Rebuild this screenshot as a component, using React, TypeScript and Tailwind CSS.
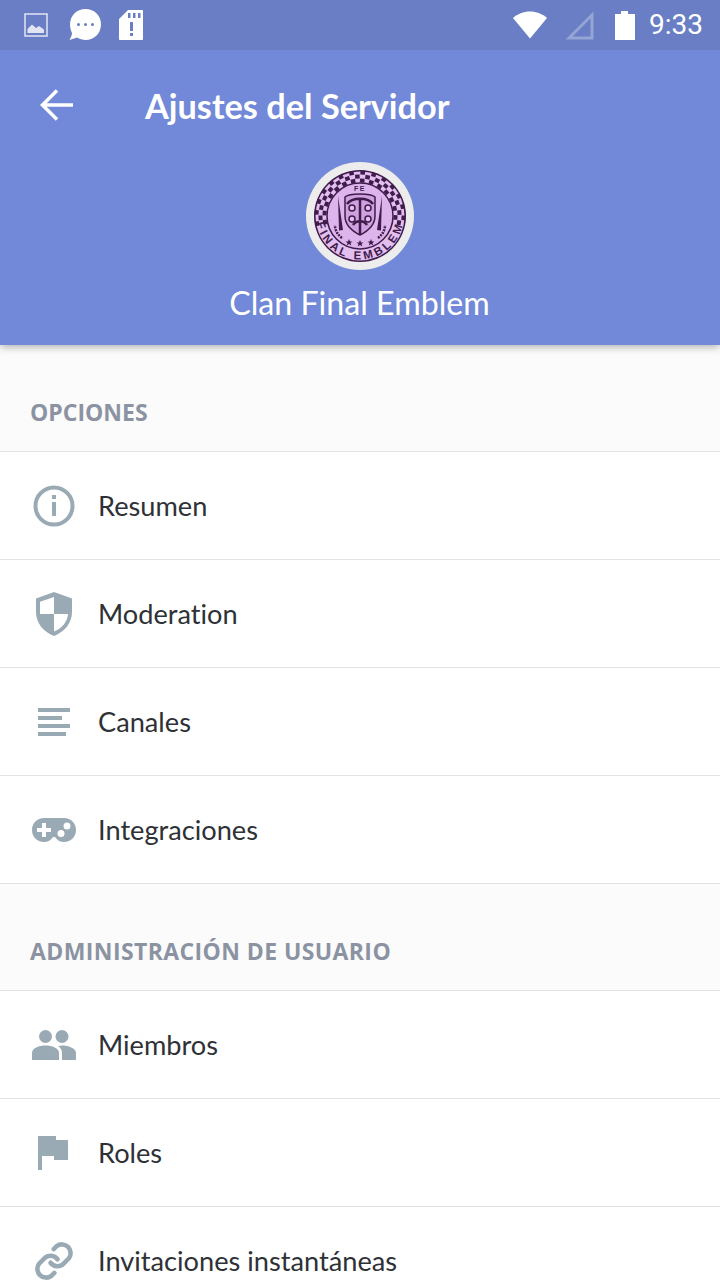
import type { ReactNode } from "react";

const font = { fontFamily: "Lato, 'Open Sans', sans-serif" };
const DARK = "#3F1C4B";

function IconBox({ children }: { children: ReactNode }) {
  return <div className="flex h-12 w-12 shrink-0 items-center justify-center text-[#99AAB5]">{children}</div>;
}

const InfoIcon = () => (
  <svg width="42" height="42" viewBox="0 0 42 42" fill="none">
    <circle cx="21" cy="21" r="18.500" stroke="currentColor" strokeWidth="4" />
    <rect x="19" y="10" width="4" height="4" fill="currentColor" />
    <rect x="19" y="17" width="4" height="14" fill="currentColor" />
  </svg>
);

const ShieldIcon = () => (
  <svg width="38" height="44" viewBox="0 0 38 44">
    <path
      fill="currentColor"
      fillRule="evenodd"
      d="M19 0 37 6.500V20C37 31 29.500 40 19 44 8.500 40 1 31 1 20V6.500ZM19 5 5 9.800V22H19ZM19 22V39.500C26.500 36.500 32.500 30 33 22Z"
    />
  </svg>
);

const LinesIcon = () => (
  <svg width="32" height="28" viewBox="0 0 32 28" fill="currentColor">
    <rect x="0" y="0" width="32" height="4" />
    <rect x="0" y="8" width="24" height="4" />
    <rect x="0" y="16" width="32" height="4" />
    <rect x="0" y="24" width="28" height="4" />
  </svg>
);

const GamepadIcon = () => (
  <svg width="44" height="24" viewBox="0 0 44 24">
    <path
      fill="currentColor"
      fillRule="evenodd"
      d="M12 0H32C39 0 44 5.400 44 12 44 18.600 39 24 32 24 28 24 25 22 23 19H21C19 22 16 24 12 24 5 24 0 18.600 0 12 0 5.400 5 0 12 0ZM10 5V10H5V14H10V19H14V14H19V10H14V5ZM35 4.500A3.500 3.500 0 1 0 35 11.500 3.500 3.500 0 1 0 35 4.500ZM29 12A3.500 3.500 0 1 0 29 19 3.500 3.500 0 1 0 29 12Z"
    />
  </svg>
);

const PeopleIcon = () => (
  <svg width="44" height="30" viewBox="0 0 44 30" fill="currentColor">
    <circle cx="13.500" cy="6.500" r="6.500" />
    <circle cx="30" cy="6.500" r="6.500" />
    <path d="M0 30V23C0 18 7 15.500 13.500 15.500 20 15.500 27 18 27 23V30Z" />
    <path d="M30 30V23C30 20 28.500 17.500 26 16 27.500 15.700 29 15.500 30 15.500 36 15.500 44 18 44 23V30Z" />
  </svg>
);

const FlagIcon = () => (
  <svg width="32" height="34" viewBox="0 0 32 34" fill="currentColor">
    <path d="M0 0H18V4H30V24H16V20H4V34H0Z" />
  </svg>
);

const LinkIcon = () => (
  <svg width="42" height="42" viewBox="0 0 24 24" fill="none" stroke="currentColor" strokeWidth="2.600" strokeLinecap="round">
    <path d="M10 13a5 5 0 0 0 7.500.5l3-3a5 5 0 0 0-7-7l-1.700 1.700" />
    <path d="M14 11a5 5 0 0 0-7.500-.5l-3 3a5 5 0 0 0 7 7l1.700-1.700" />
  </svg>
);

function Emblem() {
  const cells = [];
  // checker band, runs over the top from one end of the name to the other
  for (let row = 0; row < 3; row++) {
    const r = 35.500 + row * 4;
    for (let i = 0; i < 28; i++) {
      if ((i + row) % 2) continue;
      const deg = -190 + i * 7.400;
      const a = (deg * Math.PI) / 180;
      const cx = 46 + r * Math.cos(a);
      const cy = 46 + r * Math.sin(a);
      cells.push(
        <rect
          key={`${row}-${i}`}
          x={cx - 2.300}
          y={cy - 2}
          width="4.600"
          height="4"
          fill={DARK}
          transform={`rotate(${deg + 90} ${cx} ${cy})`}
        />,
      );
    }
  }
  return (
    <svg width="92" height="92" viewBox="0 0 92 92">
      <circle cx="46" cy="46" r="46" fill={DARK} />
      <circle cx="46" cy="46" r="44.500" fill="#E3BFF0" />
      {cells}
      <circle cx="46" cy="46" r="33" fill="#DDB5EC" stroke={DARK} strokeWidth="1.500" />
      <defs>
        <path id="bottomArc" d="M2.500 52A44 44 0 0 0 89.500 52" />
      </defs>
      <text fontSize="11.500" fontWeight="700" fill={DARK} letterSpacing="3" style={{ fontFamily: "'Liberation Sans', sans-serif" }}>
        <textPath href="#bottomArc" startOffset="50%" textAnchor="middle">
          FINAL EMBLEM
        </textPath>
      </text>
      <text x="46" y="21" fontSize="7" fontWeight="700" fill={DARK} textAnchor="middle" letterSpacing="1.500" style={{ fontFamily: "'Liberation Sans', sans-serif" }}>
        FE
      </text>
      <path d="M31 27C36 23 56 23 61 27V46C61 56 52 62 46 65 40 62 31 56 31 46Z" fill="#CFA2DF" stroke={DARK} strokeWidth="1.500" />
      <path d="M46 30V64M33 34C38 27 54 27 59 34M39 55C42 50 50 50 53 55" stroke={DARK} strokeWidth="2.500" fill="none" />
      <circle cx="38" cy="38" r="3" fill="#E3BFF0" stroke={DARK} strokeWidth="1.500" />
      <circle cx="54" cy="38" r="3" fill="#E3BFF0" stroke={DARK} strokeWidth="1.500" />
      <circle cx="38" cy="49" r="3" fill="#E3BFF0" stroke={DARK} strokeWidth="1.500" />
      <circle cx="54" cy="49" r="3" fill="#E3BFF0" stroke={DARK} strokeWidth="1.500" />
      <path d="M24 26 29 60 25 60.500Z" fill={DARK} />
      <path d="M68 26 63 60 67 60.500Z" fill={DARK} />
      <path d="M28 68C23 64 21 60 21 55M64 68C69 64 71 60 71 55" stroke={DARK} strokeWidth="2.500" fill="none" strokeDasharray="2 1" />
      <g fill={DARK}>
        <path d="M35 69l1 2.500h2.500l-2 1.500.8 2.500-2.300-1.500-2.300 1.500.8-2.500-2-1.500H34Z" />
        <path d="M46 70l1 2.500h2.500l-2 1.500.8 2.500-2.300-1.500-2.300 1.500.8-2.500-2-1.500H45Z" />
        <path d="M57 69l1 2.500h2.500l-2 1.500.8 2.500-2.300-1.500-2.300 1.500.8-2.500-2-1.500H56Z" />
      </g>
    </svg>
  );
}

function StatusBar() {
  return (
    <div className="flex h-[50px] items-center justify-between bg-[#697EC4] pl-6 pr-[17px]">
      <div className="flex items-center">
        <svg width="24" height="24" viewBox="0 0 24 24" className="opacity-80">
          <rect x="1" y="1" width="22" height="22" fill="none" stroke="white" strokeWidth="1.500" />
          <path d="M3.500 20V16L8 11.500 12 15 15 13 20 16.500V20Z" fill="white" />
        </svg>
        <svg width="34" height="34" viewBox="0 0 34 34" className="ml-5">
          <path
            fill="white"
            fillRule="evenodd"
            d="M17.500 1C26.500 1 33 7.500 33 16.500 33 25 26.500 32 17.500 32 14.500 32 11.500 31 9 29.500L1.500 32 3 29C3.500 27.500 4 26.500 4 25 2.800 22.500 2 19.500 2 16.500 2 7.500 8.500 1 17.500 1ZM10.500 15A1.500 1.500 0 1 0 10.500 18 1.500 1.500 0 1 0 10.500 15ZM17.500 15A1.500 1.500 0 1 0 17.500 18 1.500 1.500 0 1 0 17.500 15ZM24.500 15A1.500 1.500 0 1 0 24.500 18 1.500 1.500 0 1 0 24.500 15Z"
          />
        </svg>
        <svg width="24" height="30" viewBox="0 0 24 30" className="ml-[17px]">
          <path
            fill="white"
            fillRule="evenodd"
            d="M9 0H23C23.600 0 24 .400 24 1V29C24 29.600 23.600 30 23 30H1C.400 30 0 29.600 0 29V9ZM9 3V8H11.500V3ZM14 3V8H16.500V3ZM19 3V8H21.500V3ZM11 12V21H14V12ZM11 23V26H14V23Z"
          />
        </svg>
      </div>
      <div className="flex items-center">
        <svg width="34" height="28" viewBox="0 0 34 28">
          <path d="M17 27.500 0 7C4.500 3 10.500 .500 17 .500 23.500 .500 29.500 3 34 7Z" fill="white" />
        </svg>
        <svg width="29" height="29" viewBox="0 0 29 29" className="ml-[18px]">
          <path d="M28.500 .500V28.500H.500ZM25.500 7.500 7.500 25.500H25.500Z" fill="white" fillOpacity="0.3" fillRule="evenodd" />
        </svg>
        <svg width="20" height="29" viewBox="0 0 20 29" className="ml-[21px]">
          <path d="M6 0H13V3H20V29H0V3H6Z" fill="white" />
        </svg>
        <span className="ml-[14px] text-[28px] leading-none text-white" style={{ fontFamily: "Roboto, sans-serif" }}>
          9:33
        </span>
      </div>
    </div>
  );
}

function Row({ icon, label }: { icon: ReactNode; label: string }) {
  return (
    <div className="flex h-[108px] shrink-0 items-center gap-5 border-b border-[#E3E3E3] bg-white pl-[30px]">
      <IconBox>{icon}</IconBox>
      <span className="text-[27.200px] leading-none text-[#2E3136] [font-variant-ligatures:none]">{label}</span>
    </div>
  );
}

function Section({ title, tracking = "" }: { title: string; tracking?: string }) {
  return (
    <div className="flex h-[107px] shrink-0 items-end border-b border-[#E3E3E3] bg-[#FBFBFB] pb-6 pl-[30px]">
      <span className={`font-['Open_Sans',sans-serif] text-[23px] font-bold leading-[30px] text-[#8B93A3] ${tracking}`}>{title}</span>
    </div>
  );
}

export default function App() {
  return (
    <div className="flex h-[1280px] w-[720px] flex-col overflow-hidden bg-white" style={font}>
      <div className="relative z-10 shrink-0 bg-[#7189D8] shadow-[0_2px_8px_rgba(0,0,0,0.3)]">
        <StatusBar />
        <div className="flex h-[112px] items-center pb-[2px] pl-10">
          <svg width="34" height="32" viewBox="0 0 34 32" fill="none" stroke="white" strokeWidth="3.500">
            <path d="M33 16H3M17 1.500 2.500 16 17 30.500" />
          </svg>
          <span className="ml-[71px] pt-[2px] text-[34.300px] font-bold leading-none text-white">Ajustes del Servidor</span>
        </div>
        <div className="flex h-[183px] flex-col items-center">
          <div className="flex h-[108px] w-[108px] items-center justify-center rounded-full bg-[#EDEDED]">
            <Emblem />
          </div>
          <span className="mt-[15px] pr-[1px] text-[32.200px] leading-[36px] text-white">Clan Final Emblem</span>
        </div>
      </div>
      <Section title="OPCIONES" />
      <Row icon={<InfoIcon />} label="Resumen" />
      <Row icon={<ShieldIcon />} label="Moderation" />
      <Row icon={<LinesIcon />} label="Canales" />
      <Row icon={<GamepadIcon />} label="Integraciones" />
      <Section title="ADMINISTRACIÓN DE USUARIO" tracking="tracking-[0.4px]" />
      <Row icon={<PeopleIcon />} label="Miembros" />
      <Row icon={<FlagIcon />} label="Roles" />
      <Row icon={<LinkIcon />} label="Invitaciones instantáneas" />
    </div>
  );
}
